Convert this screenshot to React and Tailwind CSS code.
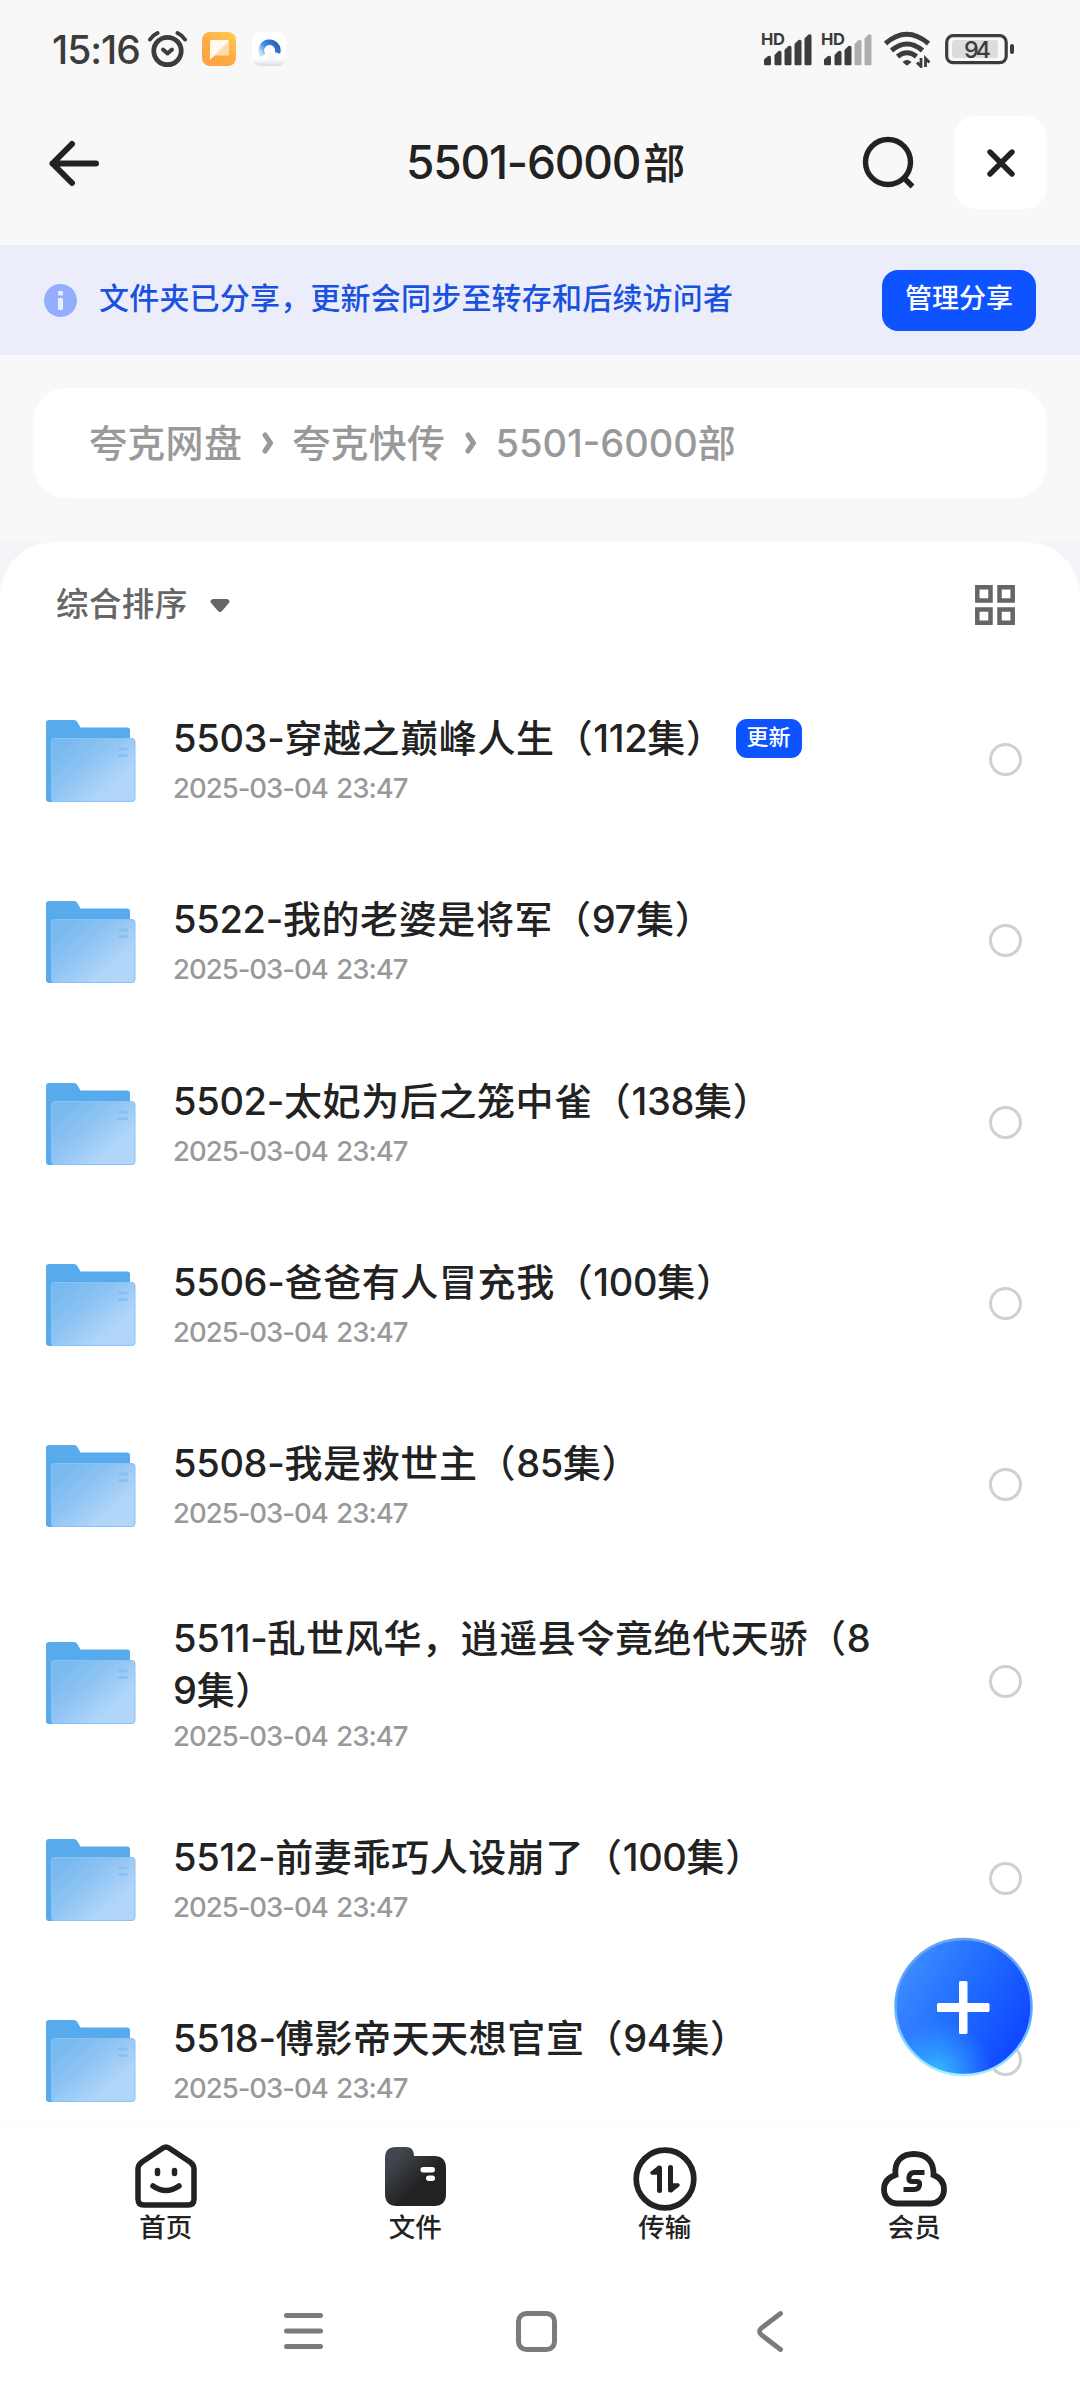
import React, { useState } from "react";

const files = [
  { id: "5503", name: "穿越之巅峰人生", count: "112", updated: true },
  { id: "5522", name: "我的老婆是将军", count: "97" },
  { id: "5502", name: "太妃为后之笼中雀", count: "138" },
  { id: "5506", name: "爸爸有人冒充我", count: "100" },
  { id: "5508", name: "我是救世主", count: "85" },
  { id: "5511", name: "乱世风华，逍遥县令竟绝代天骄", count: "89", tall: true },
  { id: "5512", name: "前妻乖巧人设崩了", count: "100" },
  { id: "5518", name: "傅影帝天天想官宣", count: "94" },
];

const Signal = ({ weak }) => (
  <svg className="overflow-visible" width="52" height="36" viewBox="0 0 52 36" fill="#3c3c3c">
    <text x="0" y="14" fontSize="16.5" fontWeight="700" textLength="24">
      HD
    </text>
    <path d="M3 28.5l4-3.4q3-1 3 1.5V33q0 1.2-1.2 1.2H4.2Q3 34.2 3 33z" />
    <path d="M13.5 24l4-4q3-1 3 1.5V33q0 1.2-1.2 1.2h-4.6q-1.2 0-1.2-1.2z" />
    <path d="M23.5 19l4-4q3-1 3 1.5V33q0 1.2-1.2 1.2h-4.6q-1.2 0-1.2-1.2z" />
    <g fill={weak ? "#adadad" : "#3c3c3c"}>
      <path d="M33.5 13l4-4q3-1 3 1.5V33q0 1.2-1.2 1.2h-4.6q-1.2 0-1.2-1.2z" />
      <path d="M43.5 7.5l4-4q3-1 3 1.5V33q0 1.2-1.2 1.2h-4.6q-1.2 0-1.2-1.2z" />
    </g>
  </svg>
);

const StatusBar = () => (
  <div className="h-[98px] flex items-center pl-[52px] pr-[65px]">
    <span className="w-[96px] text-[39px] font-[450] tracking-[-1px] text-[#3c3c3c] whitespace-nowrap pt-[2px]">
      15:16
    </span>
    {/* alarm */}
    <svg width="40" height="38" viewBox="0 0 40 38" fill="none" stroke="#3c3c3c" strokeLinecap="round">
      <circle cx="19.5" cy="21" r="13.7" strokeWidth="4.8" />
      <path d="M2 9.5q3-4.5 7.5-6.5M37 9.5q-3-4.5-7.5-6.5" strokeWidth="4" />
      <path d="M15 19.5l4.5 4 4.5-4" strokeWidth="4" strokeLinejoin="round" />
    </svg>
    <svg className="ml-[14px]" width="34" height="34" viewBox="0 0 34 34">
      <defs>
        <linearGradient id="orange" x1="1" y1="0" x2="0.3" y2="1">
          <stop offset="0" stopColor="#ffcf4d" />
          <stop offset="0.6" stopColor="#ffaa44" />
          <stop offset="1" stopColor="#ffa245" />
        </linearGradient>
      </defs>
      <rect width="34" height="34" rx="8" fill="url(#orange)" />
      <path d="M27 9v13q0 1.5-1.5 1.5H12z" fill="#ffdcae" />
      <path d="M8 28V9.5Q8 8 9.5 8H26q1 0 1 1z" fill="#fffaf0" />
    </svg>
    <svg className="ml-[16px]" width="34" height="34" viewBox="0 0 34 34">
      <defs>
        <linearGradient id="ring" x1="1" y1="0.3" x2="0" y2="0.9">
          <stop offset="0" stopColor="#2a62c4" />
          <stop offset="0.6" stopColor="#4495e4" />
          <stop offset="1" stopColor="#c9e3fa" />
        </linearGradient>
        <linearGradient id="tile" x1="0" y1="0" x2="0" y2="1">
          <stop offset="0.78" stopColor="#fff" />
          <stop offset="1" stopColor="#d9deea" />
        </linearGradient>
      </defs>
      <rect width="34" height="34" rx="8" fill="url(#tile)" />
      <path d="M11 23.5A8.3 8.3 0 1 1 25.5 21" fill="none" stroke="url(#ring)" strokeWidth="5.5" />
      <circle cx="20" cy="23.5" r="4" fill="#f7f9fd" />
    </svg>

    <div className="ml-auto flex items-center">
      <Signal />
      <div className="w-2" />
      <Signal weak />
      <svg className="ml-[11px]" width="46" height="38" viewBox="0 0 46 38" fill="none" stroke="#3c3c3c" strokeWidth="5">
        <path d="M1.5 13.5q21-18.5 43 0M7.5 20.5q15.5-13 31 0M13.5 26.5q9.5-7.5 19 0" />
        <path d="M18.5 32q4.5-4 9 0l-3.5 3q-1 .8-2 0z" fill="#3c3c3c" stroke="none" />
        <path d="M37 28v8.5l-4-4M41.5 37v-8.5l4 4" strokeWidth="2.8" />
      </svg>
      <svg className="ml-[15px]" width="70" height="32" viewBox="0 0 70 32">
        <rect x="1.7" y="2.7" width="59.5" height="27" rx="6.5" fill="none" stroke="#3c3c3c" strokeWidth="3.2" />
        <rect x="7" y="7" width="46" height="18" rx="3" fill="#dcdcdc" />
        <rect x="65" y="11" width="4" height="10" rx="2" fill="#3c3c3c" />
        <text x="19" y="24.5" fontSize="23.5" fontWeight="500" fill="#3c3c3c" textLength="27">
          94
        </text>
      </svg>
    </div>
  </div>
);

const FolderIcon = () => (
  <svg width="90" height="85" viewBox="0 0 90 85" className="shrink-0 mt-[6px]">
    <defs>
      <linearGradient id="front" x1="0.1" y1="0.15" x2="0.9" y2="0.85">
        <stop offset="0" stopColor="#78b9ef" />
        <stop offset="0.4" stopColor="#8fc4f3" />
        <stop offset="0.8" stopColor="#afd5f9" />
        <stop offset="1" stopColor="#b1d6f9" />
      </linearGradient>
    </defs>
    <path d="M0 3q0-3 3-3h25q2 0 3 1.500l3.500 6H81q3 0 3 3V60L6 82H3q-3 0-3-3z" fill="#57abec" />
    <rect x="5.5" y="18.5" width="83.5" height="63" rx="3" fill="url(#front)" stroke="#8ac3f3" strokeWidth="1" />
    <rect x="72" y="27.5" width="10" height="3" rx="1" fill="#8dc0ef" />
    <rect x="72" y="34" width="10" height="3" rx="1" fill="#8dc0ef" />
  </svg>
);

const Crumb = ({ children }) => (
  <span className="text-[38px] tracking-[0.3px]">{children}</span>
);

const CrumbArrow = () => (
  <svg width="12" height="24" viewBox="0 0 12 24" className="ml-[20px] mr-[18px]" fill="none" stroke="#999" strokeWidth="5" strokeLinecap="round" strokeLinejoin="round">
    <path d="M3 4l5.500 8L3 20" />
  </svg>
);

const FileRow = ({ file, checked, onToggle }) => (
  <div className={`flex items-center pl-[46px] pr-[58px] shrink-0 ${file.tall ? "h-[212px]" : "h-[181.300px]"}`}>
    <FolderIcon />
    <div className={`ml-[37px] w-[716px] ${file.tall ? "pt-[4px]" : "pb-px"}`}>
      <div className="flex items-center">
        <p className="text-[38px] leading-[52px] font-medium tracking-[0.6px] text-[#222] break-all">
          <span className="font-[450] tracking-[-0.3px]">{file.id}-</span>
          {file.name}（<span className="font-[450] tracking-[-0.3px]">{file.count}</span>集）
        </p>
        {file.updated && (
          <span className="ml-[11px] w-[66px] h-[39px] rounded-[11px] bg-[#0d53ff] text-white text-[22px] font-medium flex items-center justify-center pb-[2px]">
            更新
          </span>
        )}
      </div>
      <p className={`text-[27.5px] leading-[36px] tracking-[-1px] [word-spacing:2px] text-[#999] font-[450] ${file.tall ? "mt-[2px]" : "mt-[6px]"}`}>
        2025-03-04 23:47
      </p>
    </div>
    <button
      onClick={onToggle}
      className={`ml-auto w-[33px] h-[33px] rounded-full border-[3.5px] border-[#cfd0d5] ${checked ? "bg-[#0d53ff]" : ""}`}
    />
  </div>
);

const Tab = ({ label, children }) => (
  <div className="flex-1 flex flex-col items-center">
    <div className="h-[66px] flex items-end">{children}</div>
    <span className="text-[26.5px] leading-[36px] font-medium text-[#222]">{label}</span>
  </div>
);

export default function App() {
  const [selected, setSelected] = useState([]);

  const toggle = (id) =>
    setSelected((prev) => (prev.includes(id) ? prev.filter((x) => x !== id) : [...prev, id]));

  return (
    <div className="relative w-[1080px] h-[2400px] overflow-hidden flex flex-col bg-[#f8f8f8] font-[Inter,'Noto_Sans_CJK_SC',sans-serif]">
      <StatusBar />

      {/* header */}
      <header className="h-[147px] flex items-start pl-[49px] pr-[33px] pt-[18px]">
        <svg className="mt-[24px]" width="51" height="48" viewBox="0 0 51 48" fill="none" stroke="#222" strokeWidth="6" strokeLinecap="round" strokeLinejoin="round">
          <path d="M47 23.500H3.500M23 4L3.500 23.500 23 43" />
        </svg>
        <h1 className="ml-[306px] mt-[10px] text-[46px] leading-[72px] font-[450] text-[#222] tracking-[-1.200px] whitespace-nowrap">
          5501-6000<span className="ml-[3px] text-[42px]">部</span>
        </h1>
        <div className="ml-auto flex">
          <svg className="mt-[19px] mr-[38px]" width="54" height="56" viewBox="0 0 54 56" fill="none" stroke="#222" strokeWidth="5.4">
            <circle cx="26" cy="27" r="22.5" />
            <path d="M42 43l8.500 8.500" />
          </svg>
          <button className="w-[93px] h-[93px] rounded-[22px] bg-white flex items-center justify-center">
            <svg width="30" height="30" viewBox="0 0 30 30" stroke="#222" strokeWidth="5.4" strokeLinecap="round">
              <path d="M4 4l22 22M26 4L4 26" />
            </svg>
          </button>
        </div>
      </header>

      {/* share notice */}
      <div className="h-[110px] shrink-0 flex items-center bg-[#ebeefa] pl-[44px] pr-[44px]">
        <svg width="33" height="33" viewBox="0 0 33 33">
          <circle cx="16.5" cy="16.5" r="16.5" fill="#94aeff" />
          <rect x="14" y="7" width="5" height="4.5" rx="1" fill="#e8edff" />
          <rect x="14" y="14" width="5" height="12" rx="1" fill="#e8edff" />
        </svg>
        <span className="ml-[22px] mb-1 text-[30px] tracking-[0.2px] font-medium text-[#1a51df]">
          文件夹已分享，更新会同步至转存和后续访问者
        </span>
        <button className="ml-auto w-[154px] h-[61px] rounded-[16px] bg-[#0d53ff] text-white text-[27px] font-medium pb-[2px]">
          管理分享
        </button>
      </div>

      {/* breadcrumb */}
      <nav className="mt-[33px] mx-[33px] h-[110px] shrink-0 rounded-[34px] bg-white flex items-center pl-[56px] text-[#999] font-medium">
        <Crumb>夸克网盘</Crumb>
        <CrumbArrow />
        <Crumb>夸克快传</Crumb>
        <CrumbArrow />
        <span className="text-[38px]">
          <span className="font-[450]">5501-6000</span>部
        </span>
      </nav>

      <div className="mt-[44px] flex-1 min-h-0 bg-[#f4f5f8]">
        <main className="h-full rounded-t-[54px] bg-white flex flex-col">
          <div className="h-[127px] shrink-0 flex items-center justify-between pl-[56px] pr-[65px] pb-px">
            <div className="flex items-center gap-[22px] text-[#666]">
              <span className="text-[32.5px] font-medium tracking-[0.4px]">综合排序</span>
              <svg className="mt-[2px]" width="20" height="14" viewBox="0 0 20 14" fill="#666">
                <path d="M3 0h14q4 1 1.500 4.500l-6.500 7.500q-2 2-4 0L1.500 4.500Q-1 1 3 0z" />
              </svg>
            </div>
            <svg width="40" height="40" viewBox="0 0 40 40" fill="none" stroke="#666" strokeWidth="4.5">
              <path d="M2.300 2.300h13.200v13.200H2.300zM24.500 2.300h13.200v13.200H24.500zM2.300 24.500h13.200v13.200H2.300zM24.500 24.500h13.200v13.200H24.500z" />
            </svg>
          </div>

          <div className="h-[1452px] shrink-0 overflow-hidden flex flex-col">
            {files.map((file) => (
              <FileRow
                key={file.id}
                file={file}
                checked={selected.includes(file.id)}
                onToggle={() => toggle(file.id)}
              />
            ))}
          </div>

          {/* tab bar */}
          <div className="h-[149px] shrink-0 flex border-t border-[#fafafa] px-[41px] pt-[21px]">
            <Tab label="首页">
              <svg className="mb-px" width="62" height="64" viewBox="0 0 62 64" fill="none" stroke="#222" strokeWidth="5.5" strokeLinecap="round">
                <path d="M28 4q3-2 6 0l21 14q4 3 4 7v30q0 6-6 6H9q-6 0-6-6V25q0-4 4-7z" />
                <path d="M22.500 26.500v3M39.500 26.500v3" />
                <path d="M18 42q13 9 26 0" />
              </svg>
            </Tab>
            <Tab label="文件">
              <svg className="mb-[2px]" width="61" height="61" viewBox="0 0 61 61">
                <defs>
                  <linearGradient id="dark" x1="0.1" y1="0.1" x2="0.6" y2="0.6">
                    <stop offset="0.15" stopColor="#40474f" />
                    <stop offset="1" stopColor="#222" />
                  </linearGradient>
                </defs>
                <path d="M0 12Q0 1 11 1h10q8 0 8 9h20q12 0 12 12v26q0 12-12 12H12Q0 60 0 48z" fill="url(#dark)" />
                <rect x="35.5" y="21" width="14.5" height="5.5" rx="2.7" fill="#fff" />
                <rect x="41" y="29.5" width="9" height="5.5" rx="2.7" fill="#fff" />
              </svg>
            </Tab>
            <Tab label="传输">
              <svg className="mb-[-2px]" width="64" height="64" viewBox="0 0 64 64" fill="none" stroke="#222" strokeLinecap="round" strokeLinejoin="round">
                <circle cx="32" cy="32" r="28.8" strokeWidth="5.7" />
                <path d="M26.500 21v22.500M37.500 20.500V43" strokeWidth="5" />
                <path d="M26 20.500l-7 5.500h7zM38 43.500l7-5.500h-7z" fill="#222" strokeWidth="3.5" />
              </svg>
            </Tab>
            <Tab label="会员">
              <svg className="mb-[2px]" width="66" height="57" viewBox="0 0 66 57" fill="none" stroke="#222" strokeWidth="5.8">
                <path d="M16 53.500h34c7 0 13-6 13-14 0-7-4-12-10.500-14.500C53 11 45 4 33 4S13 11 14.500 25C7 27.500 3 32.500 3 39.500c0 8 6 14 13 14z" />
                {/* squared member mark */}
                <path d="M43.500 22.500H33q-4 0-5 4.500-1 4.500 3 4.500h5q3.500 0 2.500 4t-5 4H22.500" strokeWidth="5" />
              </svg>
            </Tab>
          </div>

          {/* system navigation */}
          <div className="flex-1 flex items-start pt-[40px] pl-[283px]">
            <svg width="41" height="42" viewBox="0 0 41 42" stroke="#7b7b7b" strokeWidth="5" strokeLinecap="round">
              <path d="M3.500 5.500h34M3.500 21h34M3.500 36.500h34" />
            </svg>
            <svg className="ml-[191px]" width="42" height="42" viewBox="0 0 42 42" fill="none" stroke="#7b7b7b" strokeWidth="5">
              <rect x="3.5" y="3.5" width="36" height="36" rx="8" />
            </svg>
            <svg className="ml-[199px]" width="28" height="42" viewBox="0 0 28 42" fill="none" stroke="#7b7b7b" strokeWidth="4.8" strokeLinecap="round">
              <path d="M24.500 3.500L5.500 18q-4 3.500 0 7l19 14.500" />
            </svg>
          </div>
        </main>
      </div>

      {/* floating add button */}
      <button className="absolute left-[894px] top-[1937px] w-[139px] h-[140px]">
        <svg width="139" height="140" viewBox="0 0 139 140">
          <defs>
            <linearGradient id="fab" x1="0.05" y1="0.2" x2="0.95" y2="0.7">
              <stop offset="0" stopColor="#3f8cff" />
              <stop offset="0.5" stopColor="#1f6cff" />
              <stop offset="1" stopColor="#1047ff" />
            </linearGradient>
            <radialGradient id="glow" cx="0.3" cy="1" r="0.42">
              <stop offset="0" stopColor="#38c0ff" />
              <stop offset="1" stopColor="#38a0ff" stopOpacity="0" />
            </radialGradient>
            <linearGradient id="rim" x1="0.5" y1="0" x2="0.4" y2="1">
              <stop offset="0" stopColor="#6ba3ee" />
              <stop offset="0.5" stopColor="#5aa5ff" />
              <stop offset="1" stopColor="#a5f0ff" />
            </linearGradient>
          </defs>
          <circle cx="69.5" cy="70" r="68" fill="url(#fab)" />
          <circle cx="69.5" cy="70" r="68" fill="url(#glow)" />
          <circle cx="69.5" cy="70" r="68" fill="none" stroke="url(#rim)" strokeWidth="2.5" />
          <rect x="43" y="66" width="52.5" height="9" rx="1.5" fill="#fff" />
          <rect x="65" y="44" width="8.5" height="53" rx="1.5" fill="#fff" />
        </svg>
      </button>
    </div>
  );
}
